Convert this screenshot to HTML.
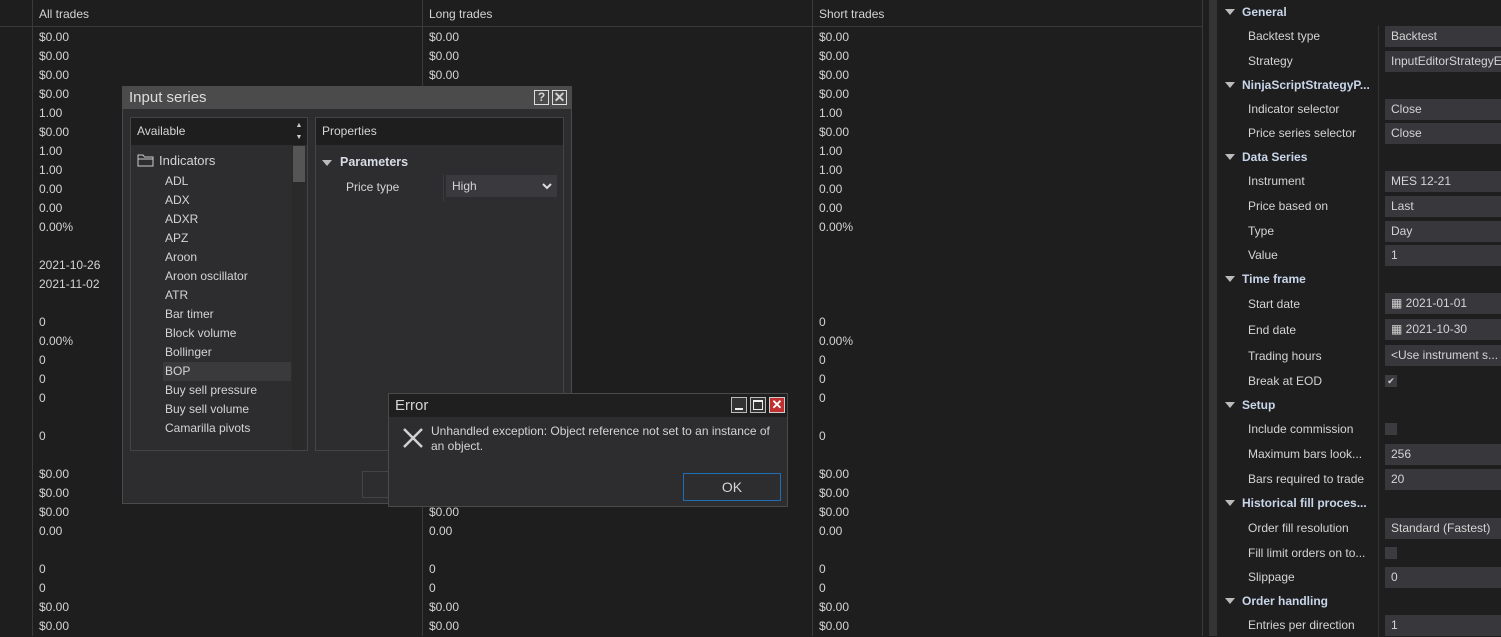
<!DOCTYPE html>
<html><head><meta charset="utf-8"><style>
*{margin:0;padding:0;box-sizing:border-box}
body{width:1501px;height:636px;overflow:hidden;background:#1e1e1e;font-family:"Liberation Sans",sans-serif;font-size:12px;color:#d4d4d4;position:relative}
.a{position:absolute}
.col{position:absolute;top:28px;line-height:19px;white-space:pre}
.hd{position:absolute;top:0;height:26px;line-height:26px}
.vl{position:absolute;top:0;width:1px;height:636px;background:#3a3a3a}
.rp{position:absolute;left:0;top:1px;width:1501px;height:636px}
.lbl{position:absolute;left:1248px;line-height:16px}
.sec{position:absolute;left:1242px;font-weight:bold;color:#c9d6ea;line-height:16px}
.sec:before{content:"";position:absolute;left:-17px;top:5px;border-left:5px solid transparent;border-right:5px solid transparent;border-top:6px solid #bbb}
.val{position:absolute;left:1385px;width:116px;height:21px;background:#38383c;line-height:21px;padding-left:6px}
.cb{position:absolute;left:1385px;width:12px;height:12px;background:#3c3c40}
</style></head><body>
<div class="a" style="left:0;top:26px;width:1202px;height:1px;background:#3a3a3a"></div>
<div class="vl" style="left:32px"></div>
<div class="vl" style="left:422px"></div>
<div class="vl" style="left:812px"></div>
<div class="vl" style="left:1202px"></div>
<div class="a" style="left:1209px;top:0;width:8px;height:636px;background:#343434"></div>
<div class="hd" style="left:39px;top:1px">All trades</div>
<div class="hd" style="left:429px;top:1px">Long trades</div>
<div class="hd" style="left:819px;top:1px">Short trades</div>
<div class="col" style="left:39px">$0.00
$0.00
$0.00
$0.00
1.00
$0.00
1.00
1.00
0.00
0.00
0.00%

2021-10-26
2021-11-02

0
0.00%
0
0
0

0

$0.00
$0.00
$0.00
0.00

0
0
$0.00
$0.00</div>
<div class="col" style="left:429px">$0.00
$0.00
$0.00
$0.00
1.00
$0.00
1.00
1.00
0.00
0.00
0.00%




0
0.00%
0
0
0

0

$0.00
$0.00
$0.00
0.00

0
0
$0.00
$0.00</div>
<div class="col" style="left:819px">$0.00
$0.00
$0.00
$0.00
1.00
$0.00
1.00
1.00
0.00
0.00
0.00%




0
0.00%
0
0
0

0

$0.00
$0.00
$0.00
0.00

0
0
$0.00
$0.00</div>

<!-- right panel -->
<div class="rp">
<div class="a" style="left:1378px;top:24px;width:1px;height:612px;background:#333"></div>
<div class="sec" style="top:3px">General</div>
<div class="lbl" style="top:27px">Backtest type</div><div class="val" style="top:25px">Backtest</div>
<div class="lbl" style="top:52px">Strategy</div><div class="val" style="top:50px">InputEditorStrategyE</div>
<div class="sec" style="top:76px">NinjaScriptStrategyP...</div>
<div class="lbl" style="top:100px">Indicator selector</div><div class="val" style="top:98px">Close</div>
<div class="lbl" style="top:124px">Price series selector</div><div class="val" style="top:122px">Close</div>
<div class="sec" style="top:148px">Data Series</div>
<div class="lbl" style="top:172px">Instrument</div><div class="val" style="top:170px">MES 12-21</div>
<div class="lbl" style="top:197px">Price based on</div><div class="val" style="top:195px">Last</div>
<div class="lbl" style="top:222px">Type</div><div class="val" style="top:220px">Day</div>
<div class="lbl" style="top:246px">Value</div><div class="val" style="top:244px">1</div>
<div class="sec" style="top:270px">Time frame</div>
<div class="lbl" style="top:295px">Start date</div><div class="val" style="top:292px">&#9638; 2021-01-01</div>
<div class="lbl" style="top:321px">End date</div><div class="val" style="top:318px">&#9638; 2021-10-30</div>
<div class="lbl" style="top:347px">Trading hours</div><div class="val" style="top:344px">&lt;Use instrument s...</div>
<div class="lbl" style="top:372px">Break at EOD</div><div class="cb" style="top:374px;font-size:9px;line-height:12px;text-align:center">&#10004;</div>
<div class="sec" style="top:396px">Setup</div>
<div class="lbl" style="top:420px">Include commission</div><div class="cb" style="top:422px"></div>
<div class="lbl" style="top:445px">Maximum bars look...</div><div class="val" style="top:443px">256</div>
<div class="lbl" style="top:470px">Bars required to trade</div><div class="val" style="top:468px">20</div>
<div class="sec" style="top:494px">Historical fill proces...</div>
<div class="lbl" style="top:519px">Order fill resolution</div><div class="val" style="top:517px">Standard (Fastest)</div>
<div class="lbl" style="top:544px">Fill limit orders on to...</div><div class="cb" style="top:546px"></div>
<div class="lbl" style="top:568px">Slippage</div><div class="val" style="top:566px">0</div>
<div class="sec" style="top:592px">Order handling</div>
<div class="lbl" style="top:616px">Entries per direction</div><div class="val" style="top:614px">1</div>
</div>

<!-- Input series dialog -->
<div class="a" style="left:122px;top:86px;width:450px;height:418px;background:#2d2d30;border:1px solid #4a4a4a">
 <div class="a" style="left:0;top:0;width:448px;height:22px;background:#4b4b4b;font-size:15px;line-height:22px;padding-left:6px;color:#ddd">Input series</div>
 <div class="a" style="left:411px;top:3px;width:15px;height:15px;border:1px solid #ddd;font-size:12px;line-height:13px;text-align:center;font-weight:bold">?</div>
 <div class="a" style="left:429px;top:3px;width:15px;height:15px;border:1px solid #ddd;font-size:14px;line-height:13px;text-align:center;font-weight:bold">&#10005;</div>
 <div class="a" style="left:7px;top:30px;width:178px;height:334px;border:1px solid #444;background:#2d2d30">
  <div class="a" style="left:0;top:0;width:160px;height:27px;background:#1e1e1e;line-height:27px;padding-left:6px">Available</div>
  <div class="a" style="left:160px;top:0;width:16px;height:27px;background:#1e1e1e;font-size:7px;line-height:12px;text-align:center;color:#ccc;padding-top:2px">&#9650;<br>&#9660;</div>
  <div class="a" style="left:161px;top:28px;width:14px;height:304px;background:#2a2a2a"></div>
  <div class="a" style="left:162px;top:28px;width:12px;height:36px;background:#555"></div>
  <div class="a" style="left:32px;top:244px;width:128px;height:19px;background:#3a3a3c"></div>
  <svg class="a" style="left:6px;top:35px" width="18" height="14"><path d="M1 2h5l1.5 2H16v9H1z M1 6h15" fill="none" stroke="#ccc" stroke-width="1"/></svg>
  <div class="a" style="left:28px;top:35px;font-size:13px;line-height:16px">Indicators</div>
  <div class="a" style="left:34px;top:54px;line-height:19px;white-space:pre">ADL
ADX
ADXR
APZ
Aroon
Aroon oscillator
ATR
Bar timer
Block volume
Bollinger
BOP
Buy sell pressure
Buy sell volume
Camarilla pivots</div>
 </div>
 <div class="a" style="left:192px;top:30px;width:249px;height:334px;border:1px solid #444">
  <div class="a" style="left:0;top:0;width:247px;height:27px;background:#1e1e1e;line-height:27px;padding-left:6px">Properties</div>
  <div class="a" style="left:6px;top:42px;border-left:5px solid transparent;border-right:5px solid transparent;border-top:6px solid #bbb"></div>
  <div class="a" style="left:24px;top:37px;font-weight:bold;font-size:12.5px;color:#d8dce4">Parameters</div>
  <div class="a" style="left:30px;top:62px">Price type</div>
  <div class="a" style="left:127px;top:56px;width:1px;height:28px;background:#3a3a3a"></div>
  <div class="a" style="left:130px;top:57px;width:111px;height:22px;background:#3a3a3e;line-height:22px;padding-left:6px">High<svg class="a" style="right:5px;top:8px" width="10" height="7"><path d="M1 1l4 4 4-4" fill="none" stroke="#ddd" stroke-width="2"/></svg></div>
 </div>
 <div class="a" style="left:239px;top:384px;width:30px;height:27px;border:1px solid #444"></div>
</div>

<!-- Error dialog -->
<div class="a" style="left:388px;top:393px;width:400px;height:114px;background:#2d2d30;border:1px solid #4a4a4a">
 <div class="a" style="left:0;top:0;width:398px;height:23px;background:#1f1f1f;font-size:15px;line-height:23px;padding-left:6px">Error</div>
 <div class="a" style="left:342px;top:3px;width:16px;height:16px;border:1px solid #bbb;background:#333"><div class="a" style="left:3px;top:10px;width:8px;height:2px;background:#eee"></div></div>
 <div class="a" style="left:361px;top:3px;width:16px;height:16px;border:1px solid #bbb;background:#333"><div class="a" style="left:2px;top:2px;width:10px;height:10px;border:1px solid #eee;border-top-width:2px"></div></div>
 <div class="a" style="left:380px;top:3px;width:16px;height:16px;border:1px solid #ccc;background:#c03030;color:#fff;font-size:13px;line-height:14px;text-align:center;font-weight:bold">&#10005;</div>
 <svg class="a" style="left:13px;top:33px" width="22" height="22"><path d="M2 2L20 20M20 2L2 20" stroke="#d0d0d0" stroke-width="2.5"/></svg>
 <div class="a" style="left:42px;top:30px;line-height:15px;width:340px">Unhandled exception: Object reference not set to an instance of an object.</div>
 <div class="a" style="left:294px;top:79px;width:98px;height:28px;border:1px solid #1e6fb5;text-align:center;line-height:26px;font-size:14px">OK</div>
</div>
</body></html>
